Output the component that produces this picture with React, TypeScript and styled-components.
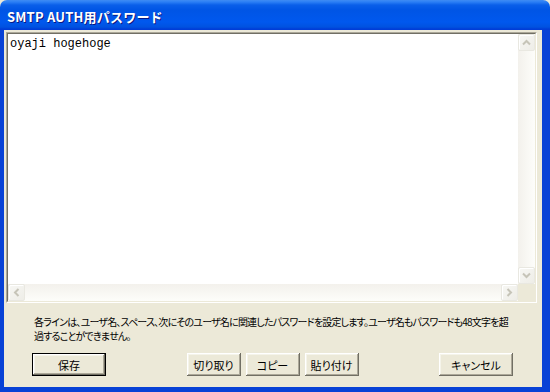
import styled, { createGlobalStyle } from "styled-components";

const GlobalStyle = createGlobalStyle`
  html, body {
    margin: 0;
    padding: 0;
    background: #ece9d8;
  }
  body {
    width: 550px;
    height: 392px;
    overflow: hidden;
  }
`;

const FACE = "#ece9d8";
const FRAME = "#0842d6";
const UI_FONT = `"Noto Sans CJK JP", "Noto Sans", sans-serif`;

const Window = styled.div`
  width: 550px;
  height: 392px;
  display: flex;
  flex-direction: column;
  font-family: ${UI_FONT};
  color: #000;
`;

const TitleBar = styled.div`
  height: 30px;
  flex-shrink: 0;
  box-sizing: border-box;
  display: flex;
  align-items: center;
  padding: 2px 0 0 7px;
  border-radius: 7px 7px 0 0;
  background: linear-gradient(
    180deg,
    #3f8cf3 0px,
    #2b7ff5 2px,
    #0a5fe9 5px,
    #0055e5 10px,
    #0058ee 22px,
    #0052e0 27px,
    #003dd7 29px
  );
  color: #fff;
  font-size: 13px;
  font-weight: bold;
  letter-spacing: 0.2px;
  text-shadow: 1px 1px #0a1883;
`;

const Frame = styled.div`
  flex: 1;
  display: flex;
  flex-direction: column;
  min-height: 0;
  background: ${FACE};
  border-style: solid;
  border-color: ${FRAME};
  border-width: 0 8px 5px 4px;
  padding: 2px 5px 0 2px;
`;

const EditorOuter = styled.div`
  height: 271px;
  box-sizing: border-box;
  border: 1px solid;
  border-color: #aca899 #ffffff #ffffff #aca899;
`;

const EditorInner = styled.div`
  height: 100%;
  box-sizing: border-box;
  border: 1px solid;
  border-color: #716f64 ${FACE} ${FACE} #716f64;
  display: grid;
  grid-template-columns: 1fr 17px;
  grid-template-rows: 1fr 17px;
`;

const TextArea = styled.div`
  background: #fff;
  padding: 3px 2px;
  font-family: "Liberation Mono", "DejaVu Sans Mono", monospace;
  font-size: 12px;
  line-height: 14px;
  white-space: pre;
`;

const ScrollTrack = styled.div<{ $vertical?: boolean }>`
  display: flex;
  flex-direction: ${({ $vertical }) => ($vertical ? "column" : "row")};
  justify-content: space-between;
  background: ${({ $vertical }) =>
    $vertical
      ? "linear-gradient(90deg, #f3f1ec, #fdfdfa)"
      : "linear-gradient(180deg, #f3f1ec, #fdfdfa)"};
`;

const ArrowButton = styled.div`
  width: 17px;
  height: 17px;
  box-sizing: border-box;
  display: flex;
  align-items: center;
  justify-content: center;
  border: 1px solid #e9e8e1;
  border-radius: 2px;
  background: linear-gradient(135deg, #f7f7f4, #eeede7);
  box-shadow: inset 1px 1px #ffffff;
`;

const Corner = styled.div`
  background: ${FACE};
`;

const Description = styled.p`
  margin: 12px 0 0 28px;
  font-size: 10px;
  line-height: 14px;
  letter-spacing: -0.8px;
  font-feature-settings: "palt";
  white-space: nowrap;
`;

const ButtonRow = styled.div`
  display: flex;
  justify-content: space-between;
  align-items: center;
  margin-top: 10px;
  padding: 0 24px 0 26px;
`;

const Group = styled.div`
  display: flex;
  gap: 5px;
`;

const Button = styled.button<{ $w: number; $default?: boolean }>`
  width: ${({ $w }) => $w}px;
  height: 23px;
  box-sizing: border-box;
  padding: 0;
  background: ${FACE};
  font-family: ${UI_FONT};
  font-size: 11px;
  font-feature-settings: "palt";
  color: #000;
  border: ${({ $default }) => ($default ? "1px solid #000" : "none")};
  box-shadow:
    inset -1px -1px #716f64,
    inset 1px 1px #ffffff,
    inset -2px -2px #aca899,
    inset 2px 2px #f5f4ea;
`;

function Chevron({ dir }: { dir: "up" | "down" | "left" | "right" }) {
  const rot = { up: 0, right: 90, down: 180, left: 270 }[dir];
  return (
    <svg width="9" height="9" viewBox="0 0 9 9">
      <polyline
        points="1,6.5 4.5,3 8,6.5"
        fill="none"
        stroke="#c6c4b8"
        strokeWidth="2"
        transform={`rotate(${rot} 4.5 4.5)`}
      />
    </svg>
  );
}

export default function App() {
  return (
    <>
      <GlobalStyle />
      <Window>
        <TitleBar>SMTP AUTH用パスワード</TitleBar>
        <Frame>
          <EditorOuter>
            <EditorInner>
              <TextArea>oyaji hogehoge</TextArea>
              <ScrollTrack $vertical>
                <ArrowButton>
                  <Chevron dir="up" />
                </ArrowButton>
                <ArrowButton>
                  <Chevron dir="down" />
                </ArrowButton>
              </ScrollTrack>
              <ScrollTrack>
                <ArrowButton>
                  <Chevron dir="left" />
                </ArrowButton>
                <ArrowButton>
                  <Chevron dir="right" />
                </ArrowButton>
              </ScrollTrack>
              <Corner />
            </EditorInner>
          </EditorOuter>
          <Description>
            各ラインは、ユーザ名、スペース、次にそのユーザ名に関連したパスワードを設定します。ユーザ名もパスワードも48文字を超
            <br />
            過することができません。
          </Description>
          <ButtonRow>
            <Button $w={74} $default>
              保存
            </Button>
            <Group>
              <Button $w={54}>切り取り</Button>
              <Button $w={54}>コピー</Button>
              <Button $w={54}>貼り付け</Button>
            </Group>
            <Button $w={74}>キャンセル</Button>
          </ButtonRow>
        </Frame>
      </Window>
    </>
  );
}
